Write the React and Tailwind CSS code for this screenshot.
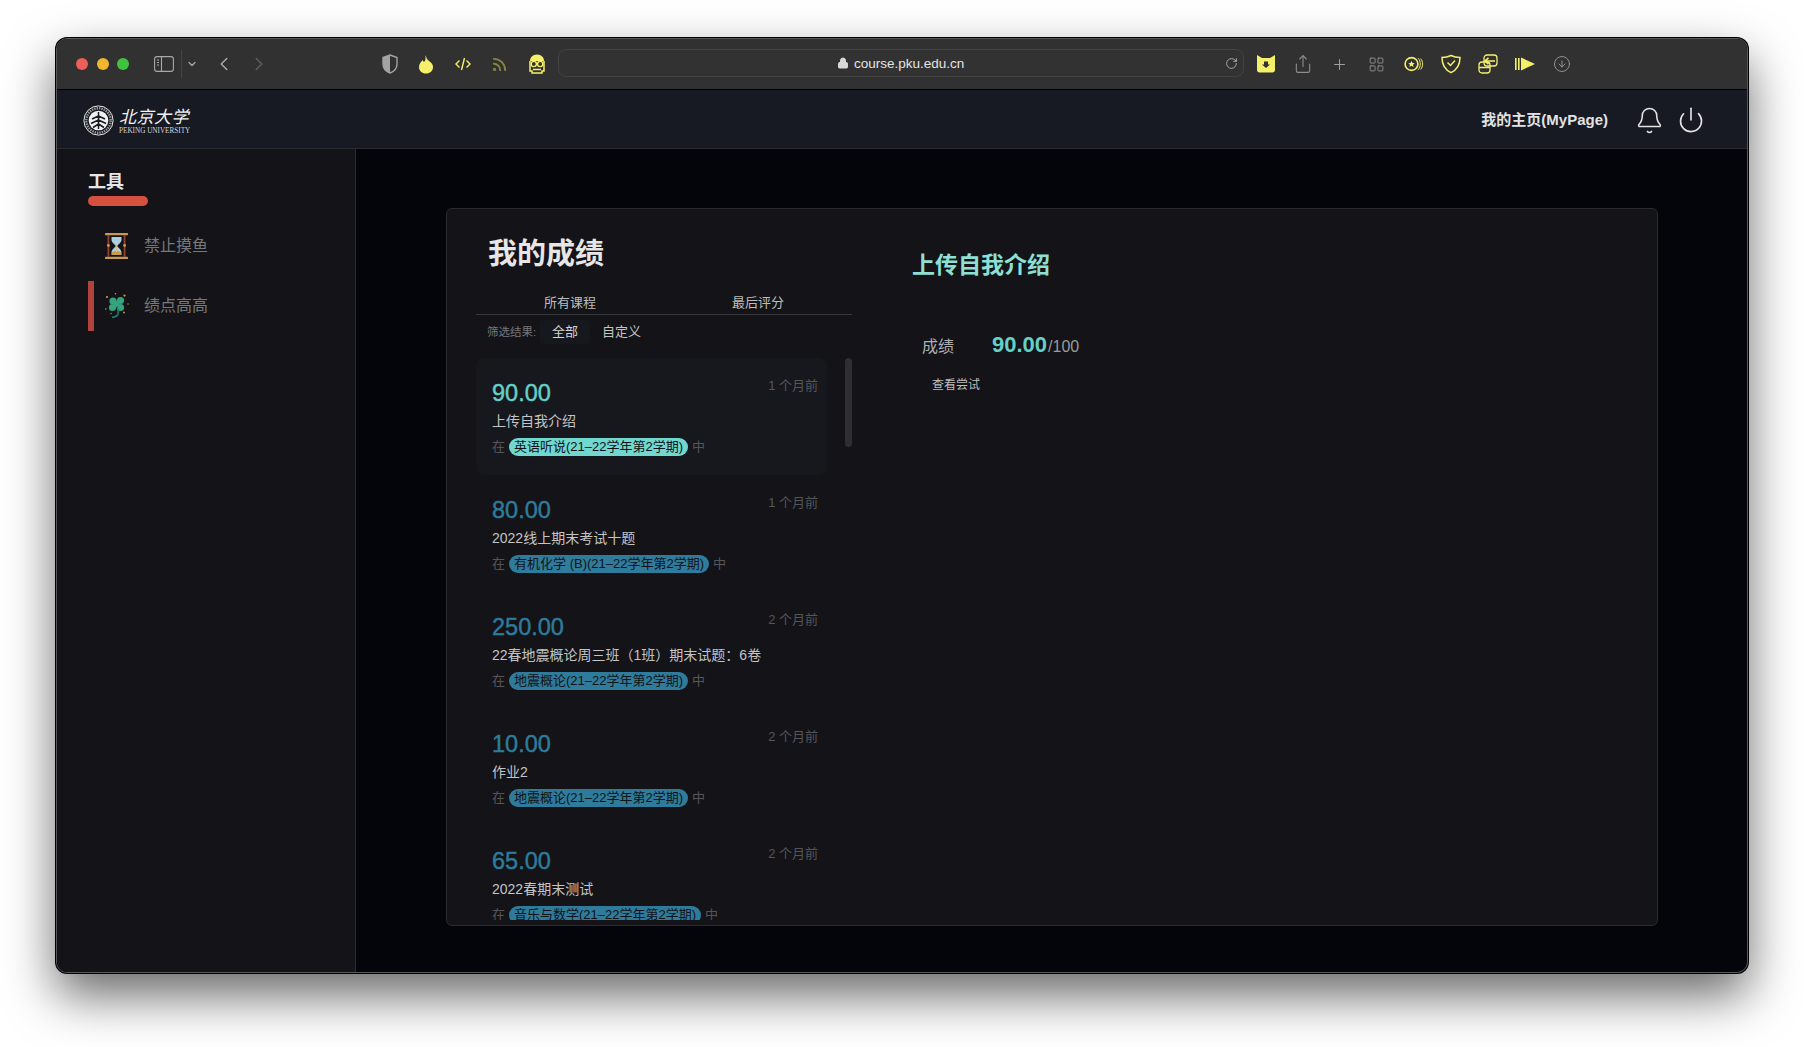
import React from 'react';
import { Bell, ChevronDown, ChevronLeft, ChevronRight, Lock, Plus, Power, RotateCw, Rss, Share, ArrowDownCircle, LayoutGrid } from 'lucide-react';

const grades = [
  { score: '90.00', title: '上传自我介绍', course: '英语听说(21–22学年第2学期)', time: '1 个月前', active: true },
  { score: '80.00', title: '2022线上期末考试十题', course: '有机化学 (B)(21–22学年第2学期)', time: '1 个月前' },
  { score: '250.00', title: '22春地震概论周三班（1班）期末试题：6卷', course: '地震概论(21–22学年第2学期)', time: '2 个月前' },
  { score: '10.00', title: '作业2', course: '地震概论(21–22学年第2学期)', time: '2 个月前' },
  { score: '65.00', title: '2022春期末测试', course: '音乐与数学(21–22学年第2学期)', time: '2 个月前' },
];

const Slot = ({ children, className = 'w-[37px]' }) => (
  <div className={`flex h-7 flex-shrink-0 items-center justify-center ${className}`}>{children}</div>
);

const ShieldHalf = () => (
  <svg width="16" height="20" viewBox="0 0 16 20">
    <path d="M8 1 L15 3.5 V10 C15 14.5 12 17.5 8 19 C4 17.5 1 14.5 1 10 V3.5 Z" fill="none" stroke="#a3a3a3" strokeWidth="1.4" />
    <path d="M8 1 L1 3.5 V10 C1 14.5 4 17.5 8 19 Z" fill="#a3a3a3" />
  </svg>
);

const Flame = () => (
  <svg width="16" height="20" viewBox="0 0 16 20">
    <path d="M8 1 C8 4 9 5 11 7 C14 9 15 11 15 13 C15 17 12 19.5 8 19.5 C4 19.5 1 17 1 13 C1 10 3 7.5 5 6 C5 8 6 8 7 7 C8 5 7 3 8 1 Z" fill="#f5f06a" />
  </svg>
);

const CodeTag = () => (
  <svg width="16" height="14" viewBox="0 0 16 14" fill="none" stroke="#f5f06a" strokeWidth="1.4">
    <path d="M4.5 3.5 L1 7 L4.5 10.5" />
    <path d="M11.5 3.5 L15 7 L11.5 10.5" />
    <path d="M9.5 1 L6.5 13" />
  </svg>
);

const Skull = () => (
  <svg width="18" height="20" viewBox="0 0 18 20">
    <path d="M9 0.5 C13.5 0.5 16 3.5 16 7 H2 C2 3.5 4.5 0.5 9 0.5 Z" fill="#f5f06a" />
    <path d="M2 7 V17 H4 V19 H14 V17 H16 V7" fill="none" stroke="#f5f06a" strokeWidth="1.5" />
    <circle cx="5.8" cy="10" r="2.6" fill="#313131" stroke="#f5f06a" strokeWidth="1.4" />
    <circle cx="12.2" cy="10" r="2.6" fill="#313131" stroke="#f5f06a" strokeWidth="1.4" />
    <path d="M5 15.5 H13" stroke="#f5f06a" strokeWidth="1.4" />
  </svg>
);

const SidebarIcon = () => (
  <svg width="20" height="16" viewBox="0 0 20 16" fill="none" stroke="#a8a8a8" strokeWidth="1.1">
    <rect x="0.6" y="0.6" width="18.8" height="14.8" rx="2.5" />
    <path d="M7.5 0.6 V15.4" />
    <path d="M3 4 H5 M3 6.5 H5 M3 9 H5" />
  </svg>
);

const CatBadge = () => (
  <svg width="18" height="18" viewBox="0 0 18 18">
    <path d="M0 0 L5 3 H13 L18 0 V15 C18 16.5 17 17.5 15.5 17.5 H2.5 C1 17.5 0 16.5 0 15 Z" fill="#f5f06a" />
    <path d="M7 6.5 H11 V9.5 H13 L9 13 L5 9.5 H7 Z" fill="#313131" />
  </svg>
);

const CoinIcon = () => (
  <svg width="20" height="16" viewBox="0 0 20 16" fill="none" stroke="#f5f06a" strokeWidth="1.3">
    <circle cx="7.5" cy="8" r="6.4" strokeWidth="1.6" />
    <path d="M7.5 4.8 L8.5 7 L10.8 7.2 L9 8.7 L9.6 11 L7.5 9.8 L5.4 11 L6 8.7 L4.2 7.2 L6.5 7 Z" fill="#f5f06a" stroke="none" />
    <path d="M14 2.2 C17 5 17 11 14 13.8" strokeWidth="1" />
    <path d="M16.5 2.6 C19.3 5.4 19.3 10.6 16.5 13.4" strokeWidth="1" />
  </svg>
);

const ShieldCheck = () => (
  <svg width="20" height="20" viewBox="0 0 20 20" fill="none" stroke="#f5f06a" strokeWidth="1.5">
    <path d="M10 1.5 C13 3 16 3.5 19 3.5 C19 10 16.5 15.5 10 18.7 C3.5 15.5 1 10 1 3.5 C4 3.5 7 3 10 1.5 Z" />
    <path d="M6.5 8.5 L9.5 11.5 L14 6.5" />
  </svg>
);

const SwapBox = () => (
  <svg width="20" height="20" viewBox="0 0 20 20" fill="none" stroke="#f5f06a" strokeWidth="1.3">
    <rect x="6" y="1" width="13" height="11" rx="3" />
    <rect x="1" y="8" width="11" height="11" rx="3" />
    <path d="M17 7 H7 M10.5 3.8 L7 7 L10.5 10.2" strokeWidth="1.6" />
    <path d="M1 13.5 H12" />
  </svg>
);

const PlayBars = () => (
  <svg width="20" height="14" viewBox="0 0 20 14" fill="#f5f06a">
    <rect x="0" y="1" width="1.6" height="12" />
    <rect x="3" y="1" width="1.6" height="12" />
    <path d="M6 0.5 L20 7 L6 13.5 Z" />
  </svg>
);

const Seal = () => (
  <svg width="31" height="31" viewBox="0 0 31 31" className="flex-shrink-0">
    <circle cx="15.5" cy="15.5" r="14.6" fill="none" stroke="#e8e8e8" strokeWidth="1" />
    <circle cx="15.5" cy="15.5" r="12.2" fill="none" stroke="#9a9a9a" strokeWidth="2.4" strokeDasharray="1.4 1" />
    <circle cx="15.5" cy="15.5" r="9.8" fill="#f0f0f0" />
    <path d="M15.5 7 V24 M15.5 11 L9 14 M15.5 11 L22 14 M15.5 15 L8 18.5 M15.5 15 L23 18.5 M15.5 19 L10 22.5 M15.5 19 L21 22.5" stroke="#171923" strokeWidth="1.5" fill="none" />
  </svg>
);

const Hourglass = () => (
  <svg width="23" height="26" viewBox="0 0 23 26">
    <rect x="0" y="0" width="23" height="2.2" rx="0.6" fill="#c79a4f" />
    <rect x="0" y="23.8" width="23" height="2.2" rx="0.6" fill="#c79a4f" />
    <rect x="2.5" y="2" width="1.8" height="22" fill="#96402e" />
    <rect x="18.7" y="2" width="1.8" height="22" fill="#96402e" />
    <circle cx="3.4" cy="12.5" r="1.4" fill="#c79a4f" />
    <circle cx="19.6" cy="12.5" r="1.4" fill="#c79a4f" />
    <path d="M6.5 4 H16.5 V7 C16.5 9.5 13 11.5 12.2 13 C13 14.5 16.5 16.5 16.5 19.5 V22 H6.5 V19.5 C6.5 16.5 10 14.5 10.8 13 C10 11.5 6.5 9.5 6.5 7 Z" fill="#a9cfe0" />
    <path d="M7 22 V19.5 C8.5 17.5 14.5 17.5 16 19.5 V22 Z" fill="#c79a4f" />
    <path d="M11 13 H12 V19 H11 Z" fill="#dcb878" />
  </svg>
);

const Clover = () => (
  <svg width="24" height="26" viewBox="0 0 24 26">
    <g fill="#35a37c">
      <circle cx="8" cy="8" r="3.6" />
      <circle cx="15.5" cy="7.5" r="3.6" />
      <circle cx="7.5" cy="14.5" r="3.6" />
      <circle cx="15.5" cy="14.5" r="3.6" />
      <circle cx="11.5" cy="11" r="3" />
    </g>
    <path d="M12 13 C13 17 14 20 12.5 22 C11.5 23.5 9.5 24 7 24.5" fill="none" stroke="#1f7f78" strokeWidth="1.5" />
    <g fill="#c9a23c">
      <circle cx="2" cy="4" r="1.1" />
      <circle cx="10.5" cy="0.8" r="0.8" />
      <circle cx="19.5" cy="2.6" r="1.1" />
      <circle cx="23" cy="11" r="0.7" />
      <circle cx="19" cy="19.5" r="0.9" />
      <circle cx="0.8" cy="16" r="0.7" />
      <circle cx="6" cy="20.5" r="0.7" />
    </g>
  </svg>
);

const GradeItem = ({ score, title, course, time, active }) => (
  <div className={`flex h-[117px] flex-shrink-0 justify-between rounded-lg pl-[16px] pr-[9px] pt-[20px] ${active ? 'bg-[#17181e]' : ''}`}>
    <div className="min-w-0">
      <div className={`h-[30px] text-[23.5px] leading-[30px] [-webkit-text-stroke:0.45px_currentColor] ${active ? 'text-[#64d0c6]' : 'text-[#2f7b9b]'}`}>{score}</div>
      <div className="mt-[3px] h-[20px] whitespace-nowrap text-[14px] leading-[20px] text-[#c4c4c4]">{title}</div>
      <div className="mt-[7px] flex h-[18px] items-center whitespace-nowrap text-[13px] text-[#555659]">
        <span>在</span>
        <span className={`mx-[4px] rounded-full px-[5px] leading-[18px] text-[#111318] ${active ? 'bg-[#70d8cf]' : 'bg-[#2f7b9b]'}`}>{course}</span>
        <span>中</span>
      </div>
    </div>
    <div className="mt-[-1px] whitespace-nowrap text-[13px] leading-[18px] text-[#555659]">{time}</div>
  </div>
);

export default function App() {
  return (
    <div className="h-[1047px] w-[1804px] overflow-hidden bg-white pl-[56px] pt-[38px] text-white [font-family:'Liberation_Sans','Noto_Sans_CJK_SC',sans-serif]">
      <div className="flex h-[935px] w-[1692px] flex-col overflow-hidden rounded-[11px] border border-[#58585a] bg-[#04050a] shadow-[0_0_0_1px_#000,0_22px_50px_rgba(0,0,0,0.6)]">
        {/* Browser toolbar */}
        <div className="flex h-[51px] flex-shrink-0 items-center border-b border-black bg-[#313131] pl-[19px]">
          <div className="flex w-[53px] flex-shrink-0 gap-[8.5px]">
            <span className="h-3 w-3 rounded-full bg-[#ee5f57]" />
            <span className="h-3 w-3 rounded-full bg-[#f0b62f]" />
            <span className="h-3 w-3 rounded-full bg-[#3fc23f]" />
          </div>
          <Slot className="ml-[20px] w-[30px]"><SidebarIcon /></Slot>
          <Slot className="ml-[2px] w-[20px] border-l border-[#444]"><ChevronDown size={12} strokeWidth={2.5} color="#a8a8a8" /></Slot>
          <Slot className="ml-[6px] w-[34px]"><ChevronLeft size={22} strokeWidth={1.6} color="#a8a8a8" /></Slot>
          <Slot className="w-[36px]"><ChevronRight size={22} strokeWidth={1.6} color="#5f5f5f" /></Slot>
          <Slot className="ml-[94px] w-[37px]"><ShieldHalf /></Slot>
          <Slot className="w-[36px]"><Flame /></Slot>
          <Slot><CodeTag /></Slot>
          <Slot><Rss size={17} strokeWidth={2.6} color="#86863f" /></Slot>
          <Slot><Skull /></Slot>
          <div className="mb-[2px] ml-[3px] flex h-7 w-[686px] flex-shrink-0 items-center rounded-lg border border-[#434343] bg-[#323232] pl-[278px] pr-[5px]">
            <Lock size={12} fill="#d8d8d8" color="#d8d8d8" className="flex-shrink-0" />
            <span className="ml-[5px] pt-[2px] text-[13.5px] text-[#e4e4e4]">course.pku.edu.cn</span>
            <RotateCw size={13} strokeWidth={1.5} color="#c0c0c0" className="ml-auto" />
          </div>
          <Slot className="ml-[3px] w-[37px]"><CatBadge /></Slot>
          <Slot><Share size={20} strokeWidth={1.3} color="#8f8f8f" /></Slot>
          <Slot><Plus size={17} strokeWidth={1.4} color="#a0a0a0" /></Slot>
          <Slot><LayoutGrid size={17} strokeWidth={1.2} color="#9a9a9a" /></Slot>
          <Slot><CoinIcon /></Slot>
          <Slot><ShieldCheck /></Slot>
          <Slot><SwapBox /></Slot>
          <Slot><PlayBars /></Slot>
          <Slot><ArrowDownCircle size={18} strokeWidth={1.2} color="#9a9a9a" /></Slot>
        </div>

        {/* Site header */}
        <div className="flex h-[59px] flex-shrink-0 items-center border-b border-[#2a2b31] bg-[#171923] pl-[26px] pt-[2px]">
          <Seal />
          <div className="ml-[5px] flex flex-col items-start">
            <span className="whitespace-nowrap text-[17px] italic leading-[22px] tracking-[0.5px] text-[#f2f2f2] [font-family:'Noto_Sans_CJK_SC',serif]">北京大学</span>
            <span className="whitespace-nowrap text-[7.2px] leading-[9px] text-[#d8d8d8] [font-family:'Liberation_Serif',serif]">PEKING UNIVERSITY</span>
          </div>
          <div className="ml-auto flex items-center pr-[42px]">
            <span className="text-[15px] font-bold text-[#e2e2e2]">我的主页(MyPage)</span>
            <Bell size={29} strokeWidth={1.3} color="#e2e2e2" className="ml-[27px]" />
            <Power size={28} strokeWidth={1.4} color="#e2e2e2" className="ml-[13px]" />
          </div>
        </div>

        <div className="flex min-h-0 flex-1">
          {/* Sidebar */}
          <div className="w-[299px] flex-shrink-0 border-r border-[#2a2b30] bg-[#131318] pl-[31px] pt-[22px]">
            <div className="h-[22px] text-[18px] font-bold leading-[22px] text-[#e6e6e6]">工具</div>
            <div className="mt-[3px] h-[10px] w-[60px] rounded-full bg-[#d5503f]" />
            <div className="mt-[15px] flex h-[50px] items-center pl-[17px]">
              <Hourglass />
              <span className="ml-[16px] text-[16px] text-[#77787b]">禁止摸鱼</span>
            </div>
            <div className="mt-[10px] flex h-[50px] items-center border-l-[6px] border-[#b0433b] pl-[11px]">
              <Clover />
              <span className="ml-[15px] text-[16px] text-[#77787b]">绩点高高</span>
            </div>
          </div>

          {/* Main */}
          <div className="min-w-0 flex-1 pl-[90px] pt-[59px]">
            <div className="flex h-[718px] w-[1212px] rounded-md border border-[#2a2b30] bg-[#131318] pl-[29px]">
              <div className="w-[376px] flex-shrink-0">
                <h1 className="mt-[25px] h-[40px] pl-[12px] text-[29px] font-bold leading-[40px] text-[#e6e6e6]">我的成绩</h1>
                <div className="mt-[17px] flex h-[24px] border-b border-[#36373c] text-[13px] leading-[23px] text-[#bdbdbd]">
                  <span className="ml-[68px]">所有课程</span>
                  <span className="ml-[136px]">最后评分</span>
                </div>
                <div className="mt-[5px] flex h-[24px] items-center">
                  <span className="ml-[11px] w-[53px] pt-[1px] text-[11.5px] text-[#77787b]">筛选结果:</span>
                  <span className="w-[50px] rounded bg-[#17181e] text-center text-[13px] leading-[24px] text-[#d4d4d4]">全部</span>
                  <span className="ml-[12px] text-[13px] text-[#c4c4c4]">自定义</span>
                </div>
                <div className="mt-[14px] flex items-start">
                  <div className="flex h-[562px] w-[351px] flex-shrink-0 flex-col overflow-hidden">
                    {grades.map((g) => (
                      <GradeItem key={g.score} {...g} />
                    ))}
                  </div>
                  <div className="ml-[18px] h-[89px] w-[7px] rounded bg-[#2e2f33]" />
                </div>
              </div>

              <div className="ml-[60px] pt-[41px]">
                <h2 className="h-[30px] text-[23px] font-bold leading-[30px] text-[#8fe0d4]">上传自我介绍</h2>
                <div className="mt-[48px] flex h-[32px] items-baseline pl-[10px]">
                  <span className="w-[70px] text-[16px] text-[#b0b0b0]">成绩</span>
                  <span className="text-[22px] font-bold text-[#64d0c6]">90.00</span>
                  <span className="ml-[1px] text-[16px] text-[#9a9a9a]">/100</span>
                </div>
                <div className="mt-[16px] pl-[20px] text-[12px] leading-[18px] text-[#bdbdbd]">查看尝试</div>
              </div>
            </div>
          </div>
        </div>
      </div>
    </div>
  );
}
